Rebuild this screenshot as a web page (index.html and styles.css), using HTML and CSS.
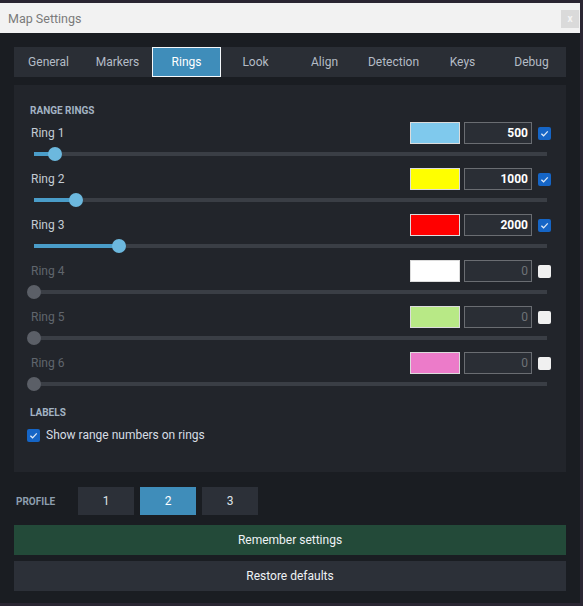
FILE: index.html
```html
<!DOCTYPE html>
<html>
<head>
<meta charset="utf-8">
<link rel="stylesheet" href="styles.css">
</head>
<body>
<div class="window">
  <div class="titlebar">
    <span class="title">Map Settings</span>
    <span class="close">x</span>
  </div>
  <div class="content">
    <div class="tabs">
      <div class="tab">General</div>
      <div class="tab">Markers</div>
      <div class="tab active">Rings</div>
      <div class="tab">Look</div>
      <div class="tab">Align</div>
      <div class="tab">Detection</div>
      <div class="tab">Keys</div>
      <div class="tab">Debug</div>
    </div>
    <div class="panel">
      <div class="section">RANGE RINGS</div>
      <div class="ring">
        <div class="ring-top">
          <span class="ring-label">Ring 1</span>
          <span class="swatch" style="background:#7fc9ed"></span>
          <span class="num">500</span>
          <span class="cb on"><svg viewBox="0 0 10 10"><path d="M2.6 5.2 L4.3 6.8 L7.5 3.4"/></svg></span>
        </div>
        <div class="slider"><div class="track"><div class="fill" style="width:4.1%"></div><div class="thumb" style="left:4.1%"></div></div></div>
      </div>
      <div class="ring">
        <div class="ring-top">
          <span class="ring-label">Ring 2</span>
          <span class="swatch" style="background:#ffff00"></span>
          <span class="num">1000</span>
          <span class="cb on"><svg viewBox="0 0 10 10"><path d="M2.6 5.2 L4.3 6.8 L7.5 3.4"/></svg></span>
        </div>
        <div class="slider"><div class="track"><div class="fill" style="width:8.2%"></div><div class="thumb" style="left:8.2%"></div></div></div>
      </div>
      <div class="ring">
        <div class="ring-top">
          <span class="ring-label">Ring 3</span>
          <span class="swatch" style="background:#ff0000"></span>
          <span class="num">2000</span>
          <span class="cb on"><svg viewBox="0 0 10 10"><path d="M2.6 5.2 L4.3 6.8 L7.5 3.4"/></svg></span>
        </div>
        <div class="slider"><div class="track"><div class="fill" style="width:16.6%"></div><div class="thumb" style="left:16.6%"></div></div></div>
      </div>
      <div class="ring off">
        <div class="ring-top">
          <span class="ring-label">Ring 4</span>
          <span class="swatch" style="background:#ffffff"></span>
          <span class="num">0</span>
          <span class="cb"></span>
        </div>
        <div class="slider"><div class="track"><div class="thumb" style="left:0%"></div></div></div>
      </div>
      <div class="ring off">
        <div class="ring-top">
          <span class="ring-label">Ring 5</span>
          <span class="swatch" style="background:#b8e986"></span>
          <span class="num">0</span>
          <span class="cb"></span>
        </div>
        <div class="slider"><div class="track"><div class="thumb" style="left:0%"></div></div></div>
      </div>
      <div class="ring off">
        <div class="ring-top">
          <span class="ring-label">Ring 6</span>
          <span class="swatch" style="background:#ec7bc9"></span>
          <span class="num">0</span>
          <span class="cb"></span>
        </div>
        <div class="slider"><div class="track"><div class="thumb" style="left:0%"></div></div></div>
      </div>
      <div class="section labels">LABELS</div>
      <div class="check-row">
        <span class="cb on"><svg viewBox="0 0 10 10"><path d="M2.6 5.2 L4.3 6.8 L7.5 3.4"/></svg></span>
        <span>Show range numbers on rings</span>
      </div>
    </div>
    <div class="profile">
      <span class="profile-label">PROFILE</span>
      <div class="pbtn">1</div>
      <div class="pbtn active">2</div>
      <div class="pbtn">3</div>
    </div>
    <div class="btn save">Remember settings</div>
    <div class="btn restore">Restore defaults</div>
  </div>
</div>
</body>
</html>
```

FILE: styles.css
```css
html, body {
  margin: 0;
  padding: 0;
  background: #2a2632;
  height: 606px;
  overflow: hidden;
}
body {
  font-family: Roboto, "Noto Sans", sans-serif;
  font-size: 12px;
}
.window {
  margin-top: 3px;
  width: 580px;
  height: 600px;
  background: #1a1d22;
  display: flex;
  flex-direction: column;
}
.titlebar {
  height: 30px;
  background: #f2f2f2;
  display: flex;
  align-items: center;
  justify-content: space-between;
  padding-left: 8px;
  box-sizing: border-box;
}
.title {
  color: #7a7a7a;
  font-size: 12.5px;
}
.close {
  width: 18px;
  height: 18px;
  margin-top: 2px;
  margin-right: 1px;
  background: #dadada;
  color: #f4f4f4;
  font-size: 10px;
  line-height: 17px;
  text-align: center;
  font-weight: bold;
}
.content {
  padding: 14px 14px 0 14px;
  display: flex;
  flex-direction: column;
}
.tabs {
  display: grid;
  grid-template-columns: repeat(8, 1fr);
  height: 30px;
  background: #2a2e35;
}
.tab {
  color: #b4bcc6;
  display: flex;
  align-items: center;
  justify-content: center;
}
.tab.active {
  background: #3f8dba;
  color: #ffffff;
  border: 1px solid #f4f8fb;
  box-sizing: border-box;
}
.panel {
  margin-top: 8px;
  background: #22252b;
  padding: 20px 15px 27px 16px;
  height: 387px;
  box-sizing: border-box;
  display: flex;
  flex-direction: column;
}
.section {
  font-size: 10px;
  font-weight: bold;
  color: #a3b3c3;
  line-height: 12px;
  height: 12px;
  margin-bottom: 5px;
}
.section.labels {
  margin-top: 9px;
  margin-bottom: 7px;
}
.ring {
  display: flex;
  flex-direction: column;
  margin-bottom: 4px;
}
.ring-top {
  display: flex;
  align-items: center;
  height: 22px;
}
.ring-label {
  flex: 1;
  color: #c4ccd4;
  margin-left: 1px;
  margin-top: -1px;
}
.ring.off .ring-label {
  color: #60656d;
}
.swatch {
  width: 48px;
  height: 20px;
  border: 1px solid #dcdcdc;
}
.num {
  margin-left: 4px;
  height: 20px;
  border: 1px solid #6a6d72;
  background: #2a2e35;
  color: #ffffff;
  font-weight: bold;
  text-align: right;
  line-height: 20px;
  padding-right: 3px;
  box-sizing: content-box;
  width: 63px;
}
.ring.off .num {
  color: #6e7277;
  font-weight: normal;
}
.cb {
  width: 13px;
  height: 13px;
  border-radius: 2px;
  background: #f0f0f0;
  margin-left: 6px;
  margin-right: 0;
  display: inline-flex;
}
.cb.on {
  background: #1565c6;
}
.cb svg {
  width: 13px;
  height: 13px;
}
.cb path {
  fill: none;
  stroke: #dfe9f6;
  stroke-width: 1;
}
.slider {
  height: 20px;
  display: flex;
  align-items: center;
  padding-left: 4px;
  padding-right: 4px;
}
.track {
  position: relative;
  flex: 1;
  height: 4px;
  background: #3a3e45;
}
.fill {
  height: 4px;
  background: #4a9dc9;
}
.thumb {
  position: absolute;
  top: -5px;
  width: 14px;
  height: 14px;
  margin-left: -7px;
  border-radius: 50%;
  background: #6cb8de;
}
.ring.off .thumb {
  background: #5b5f67;
}
.check-row {
  display: flex;
  align-items: center;
  color: #d6dde4;
  height: 18px;
  margin-left: -3px;
}
.check-row .cb {
  margin-left: 0;
  margin-right: 6px;
}
.profile {
  margin-top: 15px;
  display: flex;
  align-items: center;
  height: 28px;
  gap: 6px;
}
.profile-label {
  width: 56px;
  padding-left: 2px;
  font-size: 10px;
  font-weight: bold;
  color: #8d9eae;
}
.pbtn {
  width: 56px;
  height: 28px;
  background: #2c3038;
  color: #dde3e9;
  display: flex;
  align-items: center;
  justify-content: center;
}
.pbtn.active {
  background: #3f8dba;
  color: #ffffff;
}
.btn {
  height: 30px;
  display: flex;
  align-items: center;
  justify-content: center;
  color: #eef2f5;
}
.btn.save {
  margin-top: 10px;
  background: #234a39;
}
.btn.restore {
  margin-top: 6px;
  background: #2c3038;
}
```
